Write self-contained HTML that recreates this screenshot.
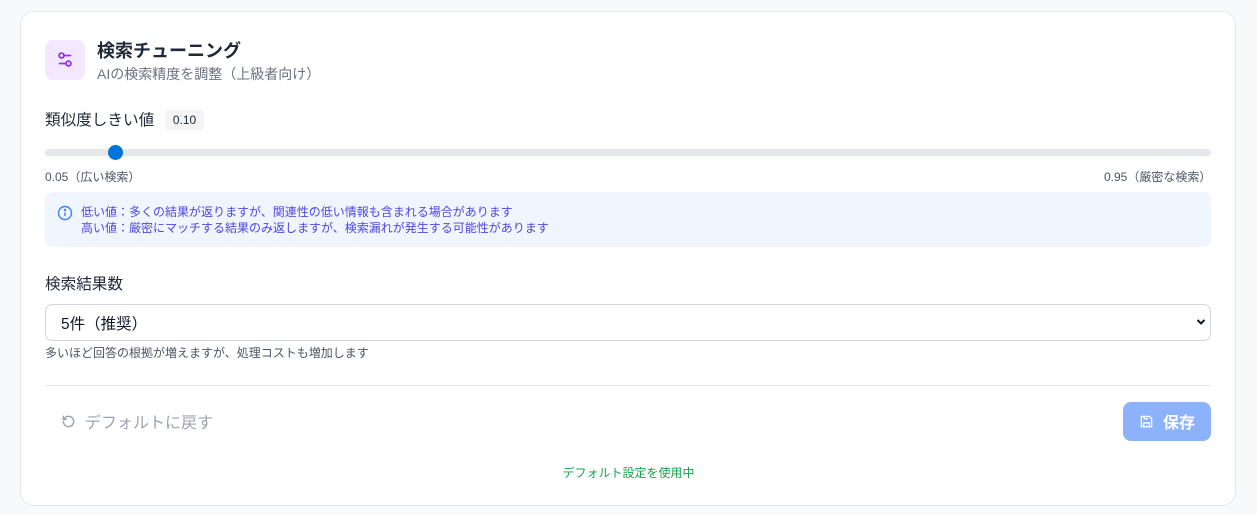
<!DOCTYPE html>
<html><head><meta charset="utf-8"><style>
*{box-sizing:border-box;margin:0;padding:0}
body{width:1257px;height:515px;background:#f8f9fb;font-family:"Liberation Sans","Noto Sans CJK JP",sans-serif;position:relative;overflow:hidden}
.card{position:absolute;left:20px;top:11px;width:1216px;height:495px;background:#fff;border:1px solid #e5e7eb;border-radius:14px}
.abs{position:absolute;white-space:nowrap}
</style></head><body>
<div class="card"></div>
<div class="abs" style="left:45px;top:40px;width:40px;height:40px;background:#f3e8ff;border-radius:8px">
<svg width="40" height="40" viewBox="0 0 40 40" fill="none" stroke="#9333ea" stroke-width="1.8" stroke-linecap="round"><circle cx="16.5" cy="15.5" r="2.4"/><line x1="18.9" y1="15.5" x2="25.5" y2="15.5"/><circle cx="23.5" cy="23.5" r="2.4"/><line x1="14.5" y1="23.5" x2="21.1" y2="23.5"/></svg></div>
<div class="abs" style="left:97px;top:37px;font-size:18px;font-weight:bold;color:#1f2937">検索チューニング</div>
<div class="abs" style="left:97px;top:64px;font-size:14px;color:#6b7280">AIの検索精度を調整（上級者向け）</div>
<div class="abs" style="left:45px;top:108px;font-size:15.6px;color:#1f2937">類似度しきい値</div>
<div class="abs" style="left:165px;top:110px;width:39px;height:20px;background:#f3f4f6;border-radius:4px;font-size:12px;color:#1f2937;text-align:center;line-height:20px">0.10</div>
<div class="abs" style="left:45px;top:149px;width:1166px;height:7px;background:#e5e7eb;border-radius:4px"></div>
<div class="abs" style="left:108px;top:145px;width:15px;height:15px;background:#0074d9;border-radius:50%"></div>
<div class="abs" style="left:45px;top:168px;font-size:12px;color:#4b5563">0.05（広い検索）</div>
<div class="abs" style="left:1104px;top:168px;font-size:12px;color:#4b5563">0.95（厳密な検索）</div>
<div class="abs" style="left:45px;top:192px;width:1166px;height:55px;background:#eff6ff;border-radius:8px"></div>
<svg class="abs" style="left:57px;top:205px" width="16" height="16" viewBox="0 0 16 16" fill="none" stroke="#3b82f6" stroke-width="1.4"><circle cx="8" cy="8" r="6.5"/><line x1="8" y1="7.3" x2="8" y2="11"/><circle cx="8" cy="5" r=".5" fill="#3b82f6"/></svg>
<div class="abs" style="left:81px;top:204px;font-size:12px;line-height:16px;color:#4f46e5">低い値：多くの結果が返りますが、関連性の低い情報も含まれる場合があります<br>高い値：厳密にマッチする結果のみ返しますが、検索漏れが発生する可能性があります</div>
<div class="abs" style="left:45px;top:272px;font-size:15.6px;color:#1f2937">検索結果数</div>
<div class="abs" style="left:45px;top:304px;width:1166px;height:37px;border:1px solid #d1d5db;border-radius:7px"></div>
<div class="abs" style="left:61px;top:312px;font-size:15.5px;color:#111827">5件（推奨）</div>
<svg class="abs" style="left:1196px;top:318px" width="10" height="8" viewBox="0 0 10 8"><path d="M1.5 2 L5 5.5 L8.5 2" fill="none" stroke="#111827" stroke-width="2"/></svg>
<div class="abs" style="left:45px;top:344px;font-size:12px;color:#4b5563">多いほど回答の根拠が増えますが、処理コストも増加します</div>
<div class="abs" style="left:45px;top:385px;width:1166px;height:1px;background:#e5e7eb"></div>
<svg class="abs" style="left:61px;top:414px" width="15" height="15" viewBox="0 0 16 16" fill="none" stroke="#9ca3af" stroke-width="1.5" stroke-linecap="round"><path d="M2.5 8a5.5 5.5 0 1 0 1.6-3.9L2.5 5.7"/><path d="M2.5 2.5v3.2h3.2"/></svg>
<div class="abs" style="left:85px;top:409px;font-size:16px;color:#9ca3af">デフォルトに戻す</div>
<div class="abs" style="left:1123px;top:402px;width:88px;height:39px;background:#8db2fc;border-radius:8px"></div>
<svg class="abs" style="left:1139px;top:414px" width="15" height="15" viewBox="0 0 16 16" fill="none" stroke="#fff" stroke-width="1.4" stroke-linejoin="round"><path d="M2.5 2.5h8.5l2.5 2.5v8.5h-11z"/><path d="M5 13.5v-4h6v4"/><path d="M5.5 2.5v2.5h4"/></svg>
<div class="abs" style="left:1163px;top:409px;font-size:16px;font-weight:bold;color:#fff">保存</div>
<div class="abs" style="left:0;width:1257px;top:464px;text-align:center;font-size:12px;color:#16a34a">デフォルト設定を使用中</div>
</body></html>
